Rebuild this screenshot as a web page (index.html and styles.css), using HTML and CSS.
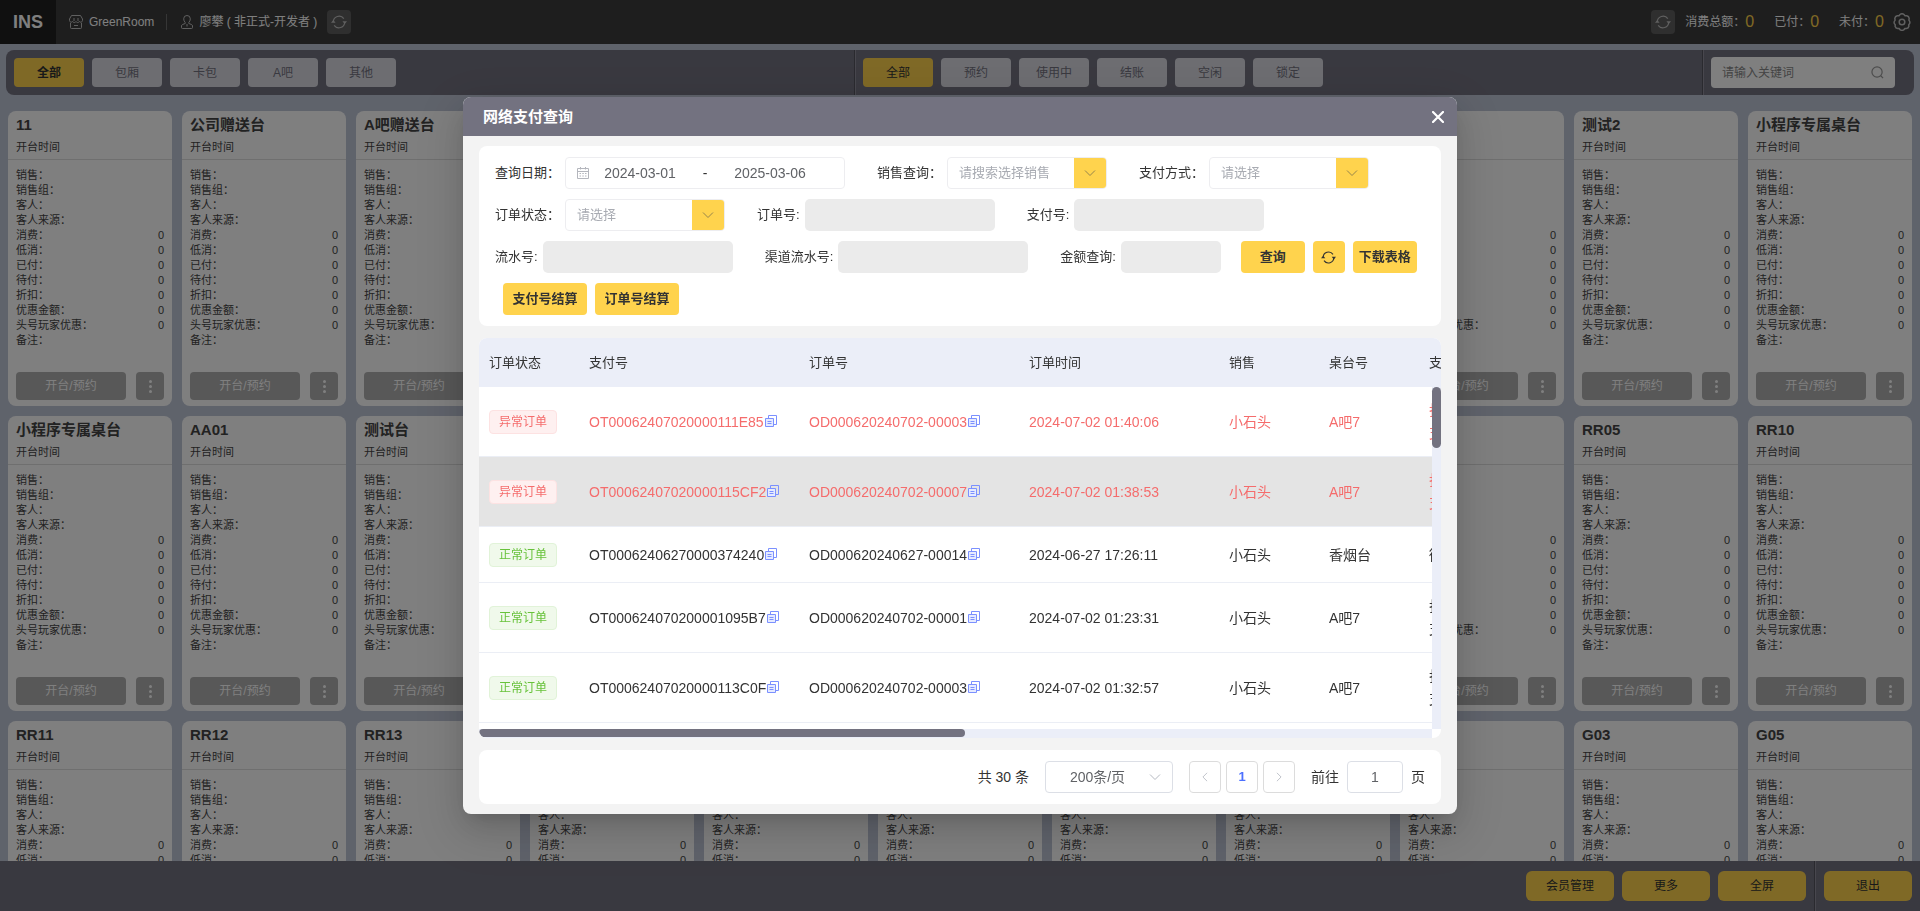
FILE: index.html
```html
<!DOCTYPE html>
<html lang="zh-CN">
<head>
    <meta charset="UTF-8">
    <meta name="viewport" content="width=device-width, initial-scale=1.0">
    <title>INS</title>
    <link rel="stylesheet" href="styles.css">
</head>
<body>
<svg class="sprite" aria-hidden="true">
    <symbol id="i-refresh" viewBox="0 0 16 16">
        <path d="M2.300 8A5.800 5.800 0 0 1 12.800 4.600M13.700 8A5.800 5.800 0 0 1 3.200 11.400" fill="none" stroke="currentColor" stroke-width="1.200"/>
        <path d="M0 8.800L2.300 6L4.600 8.800zM16 7.200L13.700 10L11.400 7.200z" fill="currentColor"/>
    </symbol>
    <symbol id="i-down" viewBox="0 0 12 12">
        <path d="M1 3.500L6 8.500L11 3.500" fill="none" stroke="currentColor"/>
    </symbol>
    <symbol id="i-copy" viewBox="0 0 12 12">
        <path d="M.5 3.500h8v8h-8z" fill="#e6ebff" stroke="currentColor"/>
        <path d="M3.500 3V.5h8v9H9M2.500 6.500h4M2.500 8.500h4" fill="none" stroke="currentColor"/>
    </symbol>
</svg>

<header class="topbar">
    <div class="logo">INS</div>
    <div class="shop">
        <svg width="14" height="14" viewBox="0 0 14 14" fill="none" stroke="currentColor">
            <path d="M2.500 .5h9l2 3.500v1.500a1.800 1.800 0 0 1-3.200 1a1.800 1.800 0 0 1-3.300 0a1.800 1.800 0 0 1-3.300 0a1.800 1.800 0 0 1-3.200-1V4zM5 3v3M9 3v3M1.500 8v4.500q0 1 1 1h9q1 0 1-1V8M5 10.500h4"/>
        </svg>
        <span>GreenRoom</span>
    </div>
    <div class="user">
        <svg width="12" height="14" viewBox="0 0 12 14" fill="none" stroke="currentColor">
            <path d="M6 .5a3.300 3.300 0 0 1 3.300 3.300q0 2.200-1.500 3.700v1l2.700 1q1 .5 1 1.500v1.500q0 1-1 1h-9q-1 0-1-1V11q0-1 1-1.500l2.700-1v-1Q2.700 6 2.700 3.800A3.300 3.300 0 0 1 6 .5zM6 9v2.500"/>
        </svg>
        <span>廖攀 ( 非正式-开发者 )</span>
        <button class="icon-btn" aria-label="刷新"><svg width="16" height="16"><use href="#i-refresh"/></svg></button>
    </div>
    <div class="totals">
        <button class="icon-btn" aria-label="刷新金额"><svg width="16" height="16"><use href="#i-refresh"/></svg></button>
        <p class="total">消费总额：<b>0</b></p>
        <p class="total">已付：<b>0</b></p>
        <p class="total">未付：<b>0</b></p>
        <button class="gear" aria-label="设置">
            <svg width="18" height="18" viewBox="0 0 18 18" fill="none" stroke="currentColor" stroke-width="1.500">
                <path d="M7 1.500q2-1.500 4 0l1 1.200l1.800.1q2 .5 2.400 2.600l-.3 1.700l.8 1.400q.5 1.300-.3 2.400l-.7 1l.2 1.300q-.5 2-2.500 2.300l-1.500.1l-1.200 1.200q-1.700 1.200-3.400 0L6.100 15.600l-1.500-.1q-2-.3-2.500-2.300l.2-1.300l-.7-1q-.8-1.100-.3-2.400l.8-1.400l-.3-1.700q.4-2.100 2.400-2.600l1.800-.1z"/>
                <circle cx="9" cy="9" r="2.800"/>
            </svg>
        </button>
    </div>
</header>

<nav class="toolbar">
    <div class="tabs">
        <button class="tab active bold">全部</button>
        <button class="tab">包厢</button>
        <button class="tab">卡包</button>
        <button class="tab">A吧</button>
        <button class="tab">其他</button>
    </div>
    <div class="tabs">
        <button class="tab active">全部</button>
        <button class="tab">预约</button>
        <button class="tab">使用中</button>
        <button class="tab">结账</button>
        <button class="tab">空闲</button>
        <button class="tab">锁定</button>
    </div>
    <div class="tabs">
        <label class="search">
            <input type="text" placeholder="请输入关键词" aria-label="关键词">
            <svg width="13" height="13" viewBox="0 0 14 14" fill="none" stroke="currentColor" stroke-width="1.300">
                <circle cx="6.500" cy="6.500" r="5.500"/><path d="M10.500 10.500L13 13"/>
            </svg>
        </label>
    </div>
</nav>

<main class="desks" id="desks"></main>

<footer class="bottombar">
    <div class="actions">
        <button>会员管理</button>
        <button>更多</button>
        <button>全屏</button>
    </div>
    <div class="actions">
        <button>退出</button>
    </div>
</footer>

<div class="mask">
    <section class="dialog" role="dialog" aria-labelledby="dialogTitle">
        <div class="dialog-head">
            <h2 id="dialogTitle">网络支付查询</h2>
            <button class="close" aria-label="关闭">
                <svg width="12" height="12" viewBox="0 0 12 12"><path d="M1 1L11 11M11 1L1 11" stroke="currentColor" stroke-width="2.200" stroke-linecap="round"/></svg>
            </button>
        </div>
        <div class="dialog-body">
            <form class="panel filters">
                <div class="filter-row">
                    <div class="field">
                        <label for="dateFrom">查询日期：</label>
                        <div class="date-range">
                            <svg width="12" height="12" viewBox="0 0 12 12" fill="none" stroke="currentColor"><path d="M.5 1.500h11v10H.5zM.5 4.500h11M3.500 0v2.500M8.500 0v2.500M2.500 6.500h1.500M5.300 6.500h1.500M8 6.500h1.500M2.500 9h1.500M5.300 9h1.500M8 9h1.500"/></svg>
                            <input type="text" id="dateFrom" value="2024-03-01">
                            <span>-</span>
                            <input type="text" value="2025-03-06" aria-label="结束日期">
                        </div>
                    </div>
                    <div class="field">
                        <label for="seller">销售查询：</label>
                        <div class="select">
                            <select id="seller"><option>请搜索选择销售</option></select>
                            <span class="arrow"><svg width="12" height="12"><use href="#i-down"/></svg></span>
                        </div>
                    </div>
                    <div class="field">
                        <label for="payType">支付方式：</label>
                        <div class="select">
                            <select id="payType"><option>请选择</option></select>
                            <span class="arrow"><svg width="12" height="12"><use href="#i-down"/></svg></span>
                        </div>
                    </div>
                </div>
                <div class="filter-row">
                    <div class="field">
                        <label for="orderState">订单状态：</label>
                        <div class="select">
                            <select id="orderState"><option>请选择</option></select>
                            <span class="arrow"><svg width="12" height="12"><use href="#i-down"/></svg></span>
                        </div>
                    </div>
                    <div class="field">
                        <label for="orderNo">订单号:</label>
                        <input type="text" class="text" id="orderNo">
                    </div>
                    <div class="field">
                        <label for="payNo">支付号:</label>
                        <input type="text" class="text" id="payNo">
                    </div>
                </div>
                <div class="filter-row">
                    <div class="field">
                        <label for="serialNo">流水号:</label>
                        <input type="text" class="text" id="serialNo">
                    </div>
                    <div class="field">
                        <label for="channelNo">渠道流水号:</label>
                        <input type="text" class="text" id="channelNo">
                    </div>
                    <div class="field">
                        <label for="amount">金额查询:</label>
                        <input type="text" class="text short" id="amount">
                    </div>
                    <div class="btns">
                        <button type="button" class="btn">查询</button>
                        <button type="button" class="btn square" aria-label="重置"><svg width="15" height="15"><use href="#i-refresh"/></svg></button>
                        <button type="button" class="btn">下载表格</button>
                    </div>
                </div>
                <div class="filter-row">
                    <div class="btns settle">
                        <button type="button" class="btn wide">支付号结算</button>
                        <button type="button" class="btn wide">订单号结算</button>
                    </div>
                </div>
            </form>

            <div class="table-box">
                <div class="table-view">
                    <table>
                        <colgroup><col class="w100"><col class="w220"><col class="w220"><col class="w200"><col class="w100"><col class="w100"><col class="w100"></colgroup>
                        <thead>
                        <tr>
                            <th>订单状态</th>
                            <th>支付号</th>
                            <th>订单号</th>
                            <th>订单时间</th>
                            <th>销售</th>
                            <th>桌台号</th>
                            <th>支付方式</th>
                        </tr>
                        </thead>
                        <tbody id="orders"></tbody>
                    </table>
                </div>
                <div class="bar-y"><div class="thumb"></div></div>
                <div class="bar-x"><div class="thumb"></div></div>
            </div>

            <div class="panel pager">
                <span>共 30 条</span>
                <div class="page-size">
                    <select aria-label="每页条数"><option>200条/页</option></select>
                    <svg width="12" height="12"><use href="#i-down"/></svg>
                </div>
                <div class="pages">
                    <button aria-label="上一页"><svg class="prev" width="10" height="10"><use href="#i-down"/></svg></button>
                    <button class="current">1</button>
                    <button aria-label="下一页"><svg class="next" width="10" height="10"><use href="#i-down"/></svg></button>
                </div>
                <div class="jump">
                    <label for="jumpPage">前往</label>
                    <input type="text" id="jumpPage" value="1">
                    <span>页</span>
                </div>
            </div>
        </div>
    </section>
</div>

<script>
    var desks = [
        '11', '公司赠送台', 'A吧赠送台', 'A吧1', 'A吧2', 'A吧3', 'A吧5', 'A吧6', 'A吧7', '测试2', '小程序专属桌台',
        '小程序专属桌台', 'AA01', '测试台', 'AA02', 'AA03', 'AA05', 'RR01', 'RR02', 'RR03', 'RR05', 'RR10',
        'RR11', 'RR12', 'RR13', 'RR15', 'RR16', 'RR17', 'RR18', 'G01', 'G02', 'G03', 'G05'
    ];
    var emptyFields = ['销售', '销售组', '客人', '客人来源'];
    var moneyFields = ['消费', '低消', '已付', '待付', '折扣', '优惠金额', '头号玩家优惠'];

    function line(name, value) {
        return '<li><span>' + name + '：</span><span>' + value + '</span></li>';
    }

    document.getElementById('desks').innerHTML = desks.map(function (name) {
        return `
            <article class="desk">
                <div class="desk-head">
                    <h3>${name}</h3>
                    <p>开台时间</p>
                </div>
                <ul>
                    ${emptyFields.map(function (f) { return line(f, ''); }).join('')}
                    ${moneyFields.map(function (f) { return line(f, '0'); }).join('')}
                    ${line('备注', '')}
                </ul>
                <div class="desk-foot">
                    <button class="open">开台/预约</button>
                    <button class="dots" aria-label="更多操作"><i></i><i></i><i></i></button>
                </div>
            </article>`;
    }).join('');

    var orders = [
        ['异常订单', 'OT00062407020000111E85', 'OD000620240702-00003', '2024-07-02 01:40:06', '小石头', 'A吧7', '扫码<br>支付', 'bad'],
        ['异常订单', 'OT00062407020000115CF2', 'OD000620240702-00007', '2024-07-02 01:38:53', '小石头', 'A吧7', '扫码<br>支付', 'bad hover'],
        ['正常订单', 'OT00062406270000374240', 'OD000620240627-00014', '2024-06-27 17:26:11', '小石头', '香烟台', '微信', ''],
        ['正常订单', 'OT000624070200001095B7', 'OD000620240702-00001', '2024-07-02 01:23:31', '小石头', 'A吧7', '扫码<br>支付', ''],
        ['正常订单', 'OT00062407020000113C0F', 'OD000620240702-00003', '2024-07-02 01:32:57', '小石头', 'A吧7', '扫码<br>支付', '']
    ];
    var copy = '<svg class="copy" width="12" height="12"><use href="#i-copy"/></svg>';

    document.getElementById('orders').innerHTML = orders.map(function (o) {
        return `
            <tr class="${o[7]}">
                <td><span class="tag">${o[0]}</span></td>
                <td>${o[1]}${copy}</td>
                <td>${o[2]}${copy}</td>
                <td>${o[3]}</td>
                <td>${o[4]}</td>
                <td>${o[5]}</td>
                <td>${o[6]}</td>
            </tr>`;
    }).join('');
</script>
</body>
</html>
```
FILE: styles.css
```css
* {
    box-sizing: border-box;
}
body {
    margin: 0;
    height: 100vh;
    display: flex;
    flex-direction: column;
    overflow: hidden;
    background: #bfc6d7;
    color: #333;
    font: 12px/16px "Liberation Sans", "Noto Sans CJK SC", sans-serif;
}
h2, h3, p, ul {
    margin: 0;
    padding: 0;
}
ul {
    list-style: none;
}
button, input, select {
    font: inherit;
    color: inherit;
    border: none;
    padding: 0;
    margin: 0;
    outline: none;
}
button {
    cursor: pointer;
    white-space: nowrap;
    display: flex;
    align-items: center;
    justify-content: center;
}
select {
    appearance: none;
    background: none;
}
svg {
    flex: none;
}
.sprite {
    display: none;
}

/* top bar */
.topbar {
    display: flex;
    align-items: center;
    flex: none;
    height: 44px;
    background: #3c3c3c;
    color: #fff;
}
.logo {
    width: 56px;
    height: 44px;
    background: #202020;
    font-size: 18px;
    line-height: 44px;
    font-weight: bold;
    text-align: center;
}
.shop {
    display: flex;
    align-items: center;
    gap: 6px;
    padding: 0 12px 0 13px;
    border-right: 1px solid #6c6c6c;
}
.user {
    display: flex;
    align-items: center;
    gap: 6px;
    padding-left: 14px;
}
.user .icon-btn {
    margin-left: 4px;
}
.shop svg, .user svg, .totals svg {
    color: #c0c0c0;
}
.icon-btn {
    width: 24px;
    height: 24px;
    border-radius: 4px;
    background: #5e5e5e;
}
.totals {
    display: flex;
    align-items: center;
    margin-left: auto;
    padding-right: 9px;
}
.total {
    display: flex;
    align-items: center;
    padding-left: 10px;
    margin-right: 18px;
}
.total + .total {
    padding-left: 2px;
}
.total b {
    font-size: 16px;
    font-weight: normal;
    color: #ffd34a;
}
.gear {
    width: 18px;
    height: 24px;
    margin-left: -9px;
    background: none;
}

/* filters of the desk list */
.toolbar {
    display: grid;
    grid-template-columns: 1fr 1fr 212px;
    flex: none;
    height: 45px;
    margin: 6px 6px 16px;
    border-radius: 8px;
    background: #737280;
}
.tabs {
    display: flex;
    align-items: center;
    gap: 8px;
    padding: 0 8px;
}
.tabs + .tabs, .actions + .actions {
    border-left: 1px solid #55545f;
    box-shadow: inset 1px 0 #908f9c;
}
.tab {
    width: 70px;
    height: 29px;
    border-radius: 4px;
    background: #dadbe3;
    color: #737280;
}
.tab.active {
    background: #ffd34d;
    color: #333;
}
.tab.bold {
    font-weight: bold;
}
.search {
    display: flex;
    align-items: center;
    width: 184px;
    height: 31px;
    padding: 0 11px;
    border-radius: 4px;
    background: #fff;
    color: #999;
}
.search input {
    flex: 1;
    min-width: 0;
    background: none;
}
.search input::placeholder {
    color: #888;
}

/* desks */
.desks {
    display: grid;
    grid-template-columns: repeat(11, 1fr);
    grid-auto-rows: max-content;
    gap: 10px;
    flex: 1;
    min-height: 0;
    overflow: hidden;
    padding: 0 8px;
}
.desk {
    height: 295px;
    display: flex;
    flex-direction: column;
    border-radius: 8px;
    background: #fff;
    font-size: 11px;
    line-height: 15px;
    color: #444;
}
.desk-head {
    padding: 4px 8px;
    height: 49px;
    border-bottom: 1px solid #dedede;
}
.desk-head h3 {
    font-size: 15px;
    line-height: 20px;
    margin-bottom: 5px;
}
.desk ul {
    padding: 8px 8px 0;
}
.desk li {
    display: flex;
    justify-content: space-between;
}
.desk-foot {
    display: flex;
    gap: 10px;
    margin-top: auto;
    padding: 0 8px 6px;
}
.desk-foot button {
    height: 28px;
    border-radius: 4px;
    background: #b0b0b0;
    color: #fff;
    font-size: 12px;
}
.open {
    flex: 1;
}
.dots {
    width: 28px;
    flex-direction: column;
    gap: 2px;
}
.dots i {
    width: 3px;
    height: 3px;
    border-radius: 50%;
    background: #fff;
}

.bottombar {
    display: flex;
    justify-content: flex-end;
    flex: none;
    height: 50px;
    background: #737280;
}
.actions {
    display: flex;
    align-items: center;
    gap: 8px;
    padding: 0 8px;
}
.actions + .actions {
    padding-left: 9px;
}
.actions button {
    width: 88px;
    height: 30px;
    border-radius: 6px;
    background: #ffd34d;
}

/* dialog */
.mask {
    position: fixed;
    inset: 0;
    display: flex;
    align-items: center;
    justify-content: center;
    background: rgba(0, 0, 0, .5);
}
.dialog {
    width: 994px;
    max-width: 100%;
    border-radius: 8px;
    overflow: hidden;
    background: #f3f3f3;
    box-shadow: 0 16px 48px 16px rgba(0, 0, 0, .08), 0 12px 32px rgba(0, 0, 0, .12), 0 8px 16px -8px rgba(0, 0, 0, .16);
}
.dialog-head {
    display: flex;
    align-items: center;
    justify-content: space-between;
    height: 39px;
    padding: 0 13px 0 20px;
    background: #737280;
    color: #fff;
}
.dialog-head h2 {
    font-size: 15px;
}
.close {
    background: none;
}
.dialog-body {
    display: flex;
    flex-direction: column;
    gap: 12px;
    padding: 10px 16px;
}
.panel {
    border-radius: 8px;
    background: #fff;
}
.filters {
    display: flex;
    flex-direction: column;
    gap: 10px;
    padding: 11px 16px;
    font-size: 13px;
}
.filter-row {
    display: flex;
    gap: 32px;
}
.field {
    display: flex;
    align-items: center;
    gap: 5px;
}
.date-range {
    display: flex;
    align-items: center;
    width: 280px;
    height: 32px;
    padding-left: 11px;
    border: 1px solid #ededf0;
    border-radius: 4px;
    font-size: 14px;
    color: #606266;
}
.date-range svg {
    color: #b4b6bd;
    margin-right: -4px;
}
.date-range input {
    width: 110px;
    text-align: center;
    background: none;
}
.date-range span {
    width: 20px;
    text-align: center;
    color: #333;
}
.select {
    display: flex;
    width: 160px;
    height: 32px;
    border: 1px solid #ededf0;
    border-radius: 4px;
    overflow: hidden;
}
.select select {
    flex: 1;
    min-width: 0;
    padding-left: 11px;
    color: #a8abb2;
}
.arrow {
    display: flex;
    align-items: center;
    justify-content: center;
    width: 32px;
    background: #ffd34d;
    color: #96854c;
}
.text {
    width: 190px;
    height: 32px;
    padding: 0 10px;
    border-radius: 5px;
    background: #ebebeb;
}
.text.short {
    width: 100px;
}
.btns {
    display: flex;
    gap: 8px;
    margin-left: -12px;
}
.btns.settle {
    margin-left: 8px;
}
.btn {
    width: 64px;
    height: 32px;
    border-radius: 4px;
    background: #ffd34d;
    font-weight: bold;
}
.btn.square {
    width: 32px;
}
.btn.wide {
    width: 84px;
}

/* orders */
.table-box {
    display: grid;
    grid-template-columns: minmax(0, 1fr) 9px;
    grid-template-rows: 49px 342px 9px;
    border-radius: 8px;
    overflow: hidden;
    background: #fff;
}
.table-view {
    grid-area: 1 / 1 / 3 / 3;
    overflow: hidden;
}
.bar-y {
    grid-area: 2 / 2;
    background: #ebeef8;
}
.bar-x {
    grid-area: 3 / 1;
    background: #ebeef8;
}
.thumb {
    border-radius: 5px;
    background: #737280;
}
.bar-y .thumb {
    height: 61px;
}
.bar-x .thumb {
    width: 51%;
    height: 8px;
}
table {
    width: 1040px;
    table-layout: fixed;
    border-collapse: separate;
    border-spacing: 0;
}
.w100 {
    width: 100px;
}
.w200 {
    width: 200px;
}
.w220 {
    width: 220px;
}
th {
    height: 49px;
    padding: 0 10px;
    background: #ebeef8;
    font-size: 13px;
    font-weight: normal;
    text-align: left;
}
td {
    height: 56px;
    padding: 12px 10px 11px;
    border-bottom: 1px solid #ebeef5;
    font-size: 14px;
    line-height: 23px;
    white-space: nowrap;
}
.bad td {
    color: #f56c6c;
}
.hover td {
    background: #e4e4e4;
}
.tag {
    display: block;
    width: 68px;
    height: 24px;
    border: 1px solid #e1f3d8;
    border-radius: 4px;
    background: #f0f9eb;
    color: #67c23a;
    font-size: 12px;
    line-height: 22px;
    text-align: center;
}
.bad .tag {
    border-color: #fde2e2;
    background: #fef0f0;
    color: #f56c6c;
}
.copy {
    margin-left: 1px;
    vertical-align: baseline;
    color: #7b90ff;
}

/* pager */
.pager {
    display: flex;
    align-items: center;
    justify-content: flex-end;
    gap: 16px;
    height: 54px;
    padding: 0 16px;
    font-size: 14px;
}
.page-size {
    display: flex;
    align-items: center;
    width: 128px;
    height: 32px;
    padding-right: 11px;
    border: 1px solid #dcdfe6;
    border-radius: 4px;
    color: #b4b8c0;
}
.page-size select {
    flex: 1;
    text-align: center;
    text-align-last: center;
    color: #606266;
}
.pages {
    display: flex;
    gap: 5px;
}
.pages button {
    width: 32px;
    height: 32px;
    border: 1px solid #dcdcdc;
    border-radius: 4px;
    background: #fff;
    color: #b4b8c0;
}
.pages .current {
    color: #4d70ff;
    font-size: 13px;
    font-weight: bold;
}
.prev {
    transform: rotate(90deg);
}
.next {
    transform: rotate(-90deg);
}
.jump {
    display: flex;
    align-items: center;
    gap: 8px;
}
.jump input {
    width: 56px;
    height: 32px;
    border: 1px solid #dcdfe6;
    border-radius: 4px;
    text-align: center;
    color: #606266;
}
```
